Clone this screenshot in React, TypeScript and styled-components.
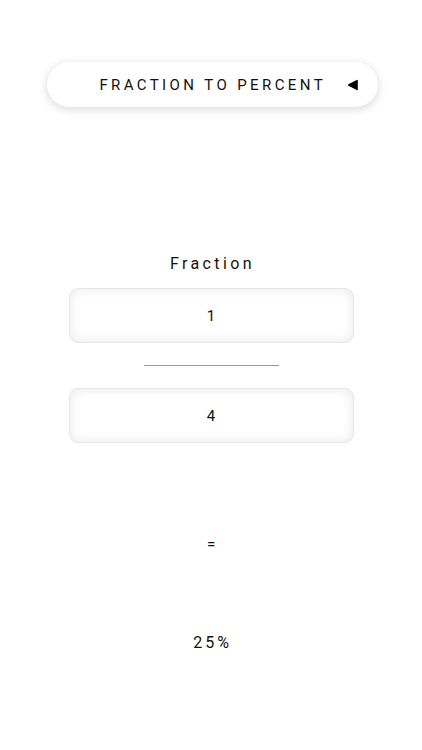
import styled, { createGlobalStyle } from 'styled-components';

const GlobalStyle = createGlobalStyle`
  html, body {
    margin: 0;
    padding: 0;
    background: #ffffff;
  }
  body {
    font-family: Roboto, "Liberation Sans", sans-serif;
    color: #111111;
  }
`;

const Page = styled.div`
  width: 422px;
  min-height: 750px;
  display: flex;
  flex-direction: column;
  align-items: center;
`;

const ModeButton = styled.button`
  margin-top: 62px;
  margin-left: 3px;
  width: 331px;
  height: 45px;
  border: none;
  border-radius: 23px;
  background: #ffffff;
  box-shadow: 0 2px 10px rgba(0, 0, 0, 0.16);
  display: flex;
  align-items: center;
  justify-content: flex-end;
  padding: 0 19px 0 0;
  gap: 21px;
  font-family: Roboto, "Liberation Sans", sans-serif;
  font-size: 15px;
  letter-spacing: 3.4px;
  color: #111111;
`;

const Arrow = styled.svg`
  width: 12px;
  height: 12px;
  flex-shrink: 0;
`;

const Label = styled.div`
  margin-top: 148px;
  font-size: 16px;
  line-height: 18px;
  letter-spacing: 3.4px;
  padding-left: 3px;
`;

const NumberBox = styled.div<{ $top: number }>`
  margin-top: ${(p) => p.$top}px;
  width: 285px;
  height: 55px;
  box-sizing: border-box;
  border: 1px solid #e6e6e6;
  border-radius: 9px;
  background: #ffffff;
  box-shadow: inset 0 0 12px rgba(0, 0, 0, 0.09);
  display: flex;
  align-items: center;
  justify-content: center;
  font-size: 15px;
`;

const Divider = styled.div`
  margin-top: 22px;
  width: 135px;
  height: 1px;
  background: #9a9a9a;
`;

const Equals = styled.div`
  margin-top: 92px;
  font-size: 15px;
  line-height: 18px;
`;

const Result = styled.div`
  margin-top: 81px;
  font-size: 16px;
  line-height: 18px;
  letter-spacing: 3px;
  padding-left: 3px;
`;

export default function App() {
  return (
    <>
      <GlobalStyle />
      <Page>
        <ModeButton>
          <span>FRACTION TO PERCENT</span>
          <Arrow viewBox="0 0 12 12">
            <path
              d="M10.8 1.6 L10.8 10.4 Q10.8 11.6 9.7 11 L1.4 6.8 Q0.5 6 1.4 5.2 L9.7 1 Q10.8 0.4 10.8 1.6 Z"
              fill="#000"
            />
          </Arrow>
        </ModeButton>
        <Label>Fraction</Label>
        <NumberBox $top={15}>1</NumberBox>
        <Divider />
        <NumberBox $top={22}>4</NumberBox>
        <Equals>=</Equals>
        <Result>25%</Result>
      </Page>
    </>
  );
}
